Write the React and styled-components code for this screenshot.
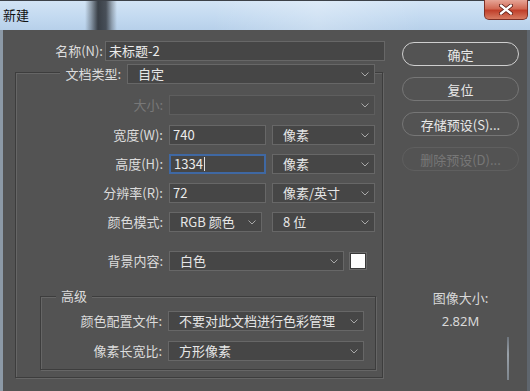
import styled, { createGlobalStyle } from 'styled-components';

const GlobalStyle = createGlobalStyle`
  html, body {
    margin: 0;
    padding: 0;
    background: #535353;
  }
  body {
    font-family: "Noto Sans CJK SC", "Noto Sans", sans-serif;
    font-size: 13px;
  }
`;

const Window = styled.div`
  width: 530px;
  height: 391px;
  display: flex;
  flex-direction: column;
  overflow: hidden;
`;

const TitleBar = styled.div`
  flex: none;
  height: 30px;
  display: flex;
  align-items: center;
  justify-content: space-between;
  box-shadow: inset 0 1px 0 #3c4148;
  background:
    linear-gradient(90deg, transparent 85px, rgba(80, 88, 96, 0.5) 91px,
      rgba(45, 50, 56, 0.92) 98px, rgba(50, 55, 62, 0.85) 106px,
      rgba(90, 98, 106, 0.45) 112px, transparent 117px),
    linear-gradient(90deg, rgba(255, 255, 255, 0) 40%, rgba(255, 255, 255, 0.25) 60%, rgba(255, 255, 255, 0) 80%),
    linear-gradient(180deg, #d3e4f5 0%, #c2d9f0 60%, #b7d0ea 100%);
`;

const TitleText = styled.span`
  padding-left: 3px;
  color: #111;
  font-size: 13px;
  line-height: 16px;
`;

const CloseButton = styled.div`
  align-self: flex-start;
  width: 44px;
  height: 20px;
  margin-right: 2px;
  display: flex;
  align-items: center;
  justify-content: center;
  box-sizing: border-box;
  border: 1px solid #7e3026;
  border-top: none;
  border-radius: 0 0 5px 5px;
  background: linear-gradient(180deg, #e6a597 0%, #d26a55 45%, #c0402b 55%, #d77b62 100%);
`;

const Body = styled.div`
  flex: 1;
  display: flex;
  background: #535353;
  border-left: 3px solid #8c99a6;
  border-right: 3px solid #5f666e;
`;

const FormColumn = styled.div`
  width: 390px;
  flex: none;
  display: flex;
  flex-direction: column;
`;

const ActionColumn = styled.div`
  flex: 1;
  display: flex;
  flex-direction: column;
  padding: 12px 0 0 9px;
`;

const NameRow = styled.div`
  display: grid;
  grid-template-columns: 100px 280px;
  column-gap: 2px;
  align-items: center;
  margin-top: 11px;
`;

const Label = styled.span`
  text-align: right;
  white-space: nowrap;
  line-height: 20px;
  color: ${p => (p.$disabled ? '#787878' : '#dcdcdc')};
`;

const MaskLabel = styled(Label)`
  justify-self: end;
  padding: 0 6px 0 5px;
  background: #535353;
`;

const TextField = styled.div`
  box-sizing: border-box;
  width: ${p => p.$w}px;
  height: 20px;
  padding: 0 3px;
  display: flex;
  align-items: center;
  background: #464646;
  border: ${p => (p.$focused ? '2px solid #3f68a3' : '1px solid #676767')};
  color: #ececec;
  line-height: 18px;
  white-space: nowrap;
`;

const Caret = styled.span`
  width: 1px;
  height: 14px;
  margin-left: 1px;
  background: #e0e0e0;
`;

const SelectBox = styled.div`
  box-sizing: border-box;
  width: ${p => p.$w}px;
  height: 20px;
  padding: 0 5px 0 10px;
  display: flex;
  align-items: center;
  justify-content: space-between;
  background: ${p => (p.$disabled ? '#4c4c4c' : '#464646')};
  border: 1px solid ${p => (p.$disabled ? '#5e5e5e' : '#676767')};
  color: #e6e6e6;
  line-height: 18px;
  white-space: nowrap;
`;

const Group = styled.div`
  box-sizing: border-box;
  width: 368px;
  height: 306px;
  margin: 11px 0 0 12px;
  display: flex;
  flex-direction: column;
  border: 1px solid #3d3d3d;
  box-shadow: 1px 1px 0 #666, inset 1px 1px 0 #666;
`;

const HeaderRow = styled.div`
  display: grid;
  grid-template-columns: 111px 248px;
  align-items: center;
  margin-top: -9px;
`;

const Row = styled.div`
  display: grid;
  grid-template-columns: ${p => p.$label}px auto;
  column-gap: 6px;
  align-items: center;
  margin-top: ${p => p.$top}px;
`;

const Fields = styled.div`
  display: flex;
  align-items: center;
  gap: ${p => p.$gap || 6}px;
`;

const Swatch = styled.div`
  width: 16px;
  height: 16px;
  box-sizing: border-box;
  background: #fff;
  border: 1px solid #3a3a3a;
  box-shadow: 0 0 0 1px #6a6a6a;
`;

const SubGroup = styled.div`
  box-sizing: border-box;
  width: 336px;
  height: 74px;
  margin: 25px 0 0 24px;
  display: flex;
  flex-direction: column;
  border: 1px solid #3d3d3d;
  box-shadow: 1px 1px 0 #666, inset 1px 1px 0 #666;
`;

const SubGroupTitle = styled.span`
  align-self: flex-start;
  margin: -9px 0 0 15px;
  padding: 0 5px;
  background: #535353;
  color: #dcdcdc;
  line-height: 16px;
`;

const DialogButton = styled.div`
  box-sizing: border-box;
  width: 117px;
  height: 24px;
  margin-bottom: 11px;
  display: flex;
  align-items: center;
  justify-content: center;
  border-radius: 12px;
  border: ${p => (p.$primary ? '1.5px solid #cfcfcf' : `1px solid ${p.$disabled ? '#5f5f5f' : '#767676'}`)};
  color: ${p => (p.$disabled ? '#777' : '#e8e8e8')};
  white-space: nowrap;
`;

const SizeInfo = styled.div`
  width: 117px;
  margin-top: 106px;
  display: flex;
  flex-direction: column;
  align-items: center;
  color: #d9d9d9;
`;

const SizeValue = styled.span`
  margin-top: 5px;
  font-family: "Noto Sans", sans-serif;
  font-size: 13px;
`;

const Streak = styled.div`
  width: 2px;
  height: 43px;
  margin: 7px 0 0 105px;
  background: linear-gradient(180deg, #6d747c, #9aa2aa 40%, #7d858d);
`;

const Chevron = () => (
  <svg width="8" height="5" viewBox="0 0 8 5">
    <polyline points="0.5,0.5 4,4 7.5,0.5" fill="none" stroke="#a8a8a8" strokeWidth="1" />
  </svg>
);

const Select = ({ w, disabled, children }) => (
  <SelectBox $w={w} $disabled={disabled}>
    <span>{children}</span>
    <Chevron />
  </SelectBox>
);

const CloseGlyph = () => (
  <svg width="14" height="11" viewBox="0 0 14 11">
    <path d="M2 1.5 L12 9.5 M12 1.5 L2 9.5" stroke="#5a1a12" strokeWidth="4" strokeLinecap="round" />
    <path d="M2 1.5 L12 9.5 M12 1.5 L2 9.5" stroke="#fff" strokeWidth="2.4" strokeLinecap="round" />
  </svg>
);

const App = () => (
  <Window>
    <GlobalStyle />
    <TitleBar>
      <TitleText>新建</TitleText>
      <CloseButton>
        <CloseGlyph />
      </CloseButton>
    </TitleBar>
    <Body>
      <FormColumn>
        <NameRow>
          <Label>名称(N):</Label>
          <TextField $w={280}>未标题-2</TextField>
        </NameRow>
        <Group>
          <HeaderRow>
            <MaskLabel>文档类型:</MaskLabel>
            <Select w={248}>自定</Select>
          </HeaderRow>
          <Row $label={147} $top={11}>
            <Label $disabled>大小:</Label>
            <Select w={206} disabled />
          </Row>
          <Row $label={147} $top={10}>
            <Label>宽度(W):</Label>
            <Fields>
              <TextField $w={97}>740</TextField>
              <Select w={103}>像素</Select>
            </Fields>
          </Row>
          <Row $label={147} $top={9}>
            <Label>高度(H):</Label>
            <Fields>
              <TextField $w={97} $focused>
                1334
                <Caret />
              </TextField>
              <Select w={103}>像素</Select>
            </Fields>
          </Row>
          <Row $label={147} $top={9}>
            <Label>分辨率(R):</Label>
            <Fields>
              <TextField $w={97}>72</TextField>
              <Select w={103}>像素/英寸</Select>
            </Fields>
          </Row>
          <Row $label={147} $top={9}>
            <Label>颜色模式:</Label>
            <Fields $gap={10}>
              <Select w={93}>RGB 颜色</Select>
              <Select w={103}>8 位</Select>
            </Fields>
          </Row>
          <Row $label={147} $top={19}>
            <Label>背景内容:</Label>
            <Fields>
              <Select w={175}>白色</Select>
              <Swatch />
            </Fields>
          </Row>
          <SubGroup>
            <SubGroupTitle>高级</SubGroupTitle>
            <Row $label={121} $top={7}>
              <Label>颜色配置文件:</Label>
              <Select w={196}>不要对此文档进行色彩管理</Select>
            </Row>
            <Row $label={121} $top={10}>
              <Label>像素长宽比:</Label>
              <Select w={196}>方形像素</Select>
            </Row>
          </SubGroup>
        </Group>
      </FormColumn>
      <ActionColumn>
        <DialogButton $primary>确定</DialogButton>
        <DialogButton>复位</DialogButton>
        <DialogButton>存储预设(S)...</DialogButton>
        <DialogButton $disabled>删除预设(D)...</DialogButton>
        <SizeInfo>
          <span>图像大小:</span>
          <SizeValue>2.82M</SizeValue>
        </SizeInfo>
        <Streak />
      </ActionColumn>
    </Body>
  </Window>
);

export default App;
